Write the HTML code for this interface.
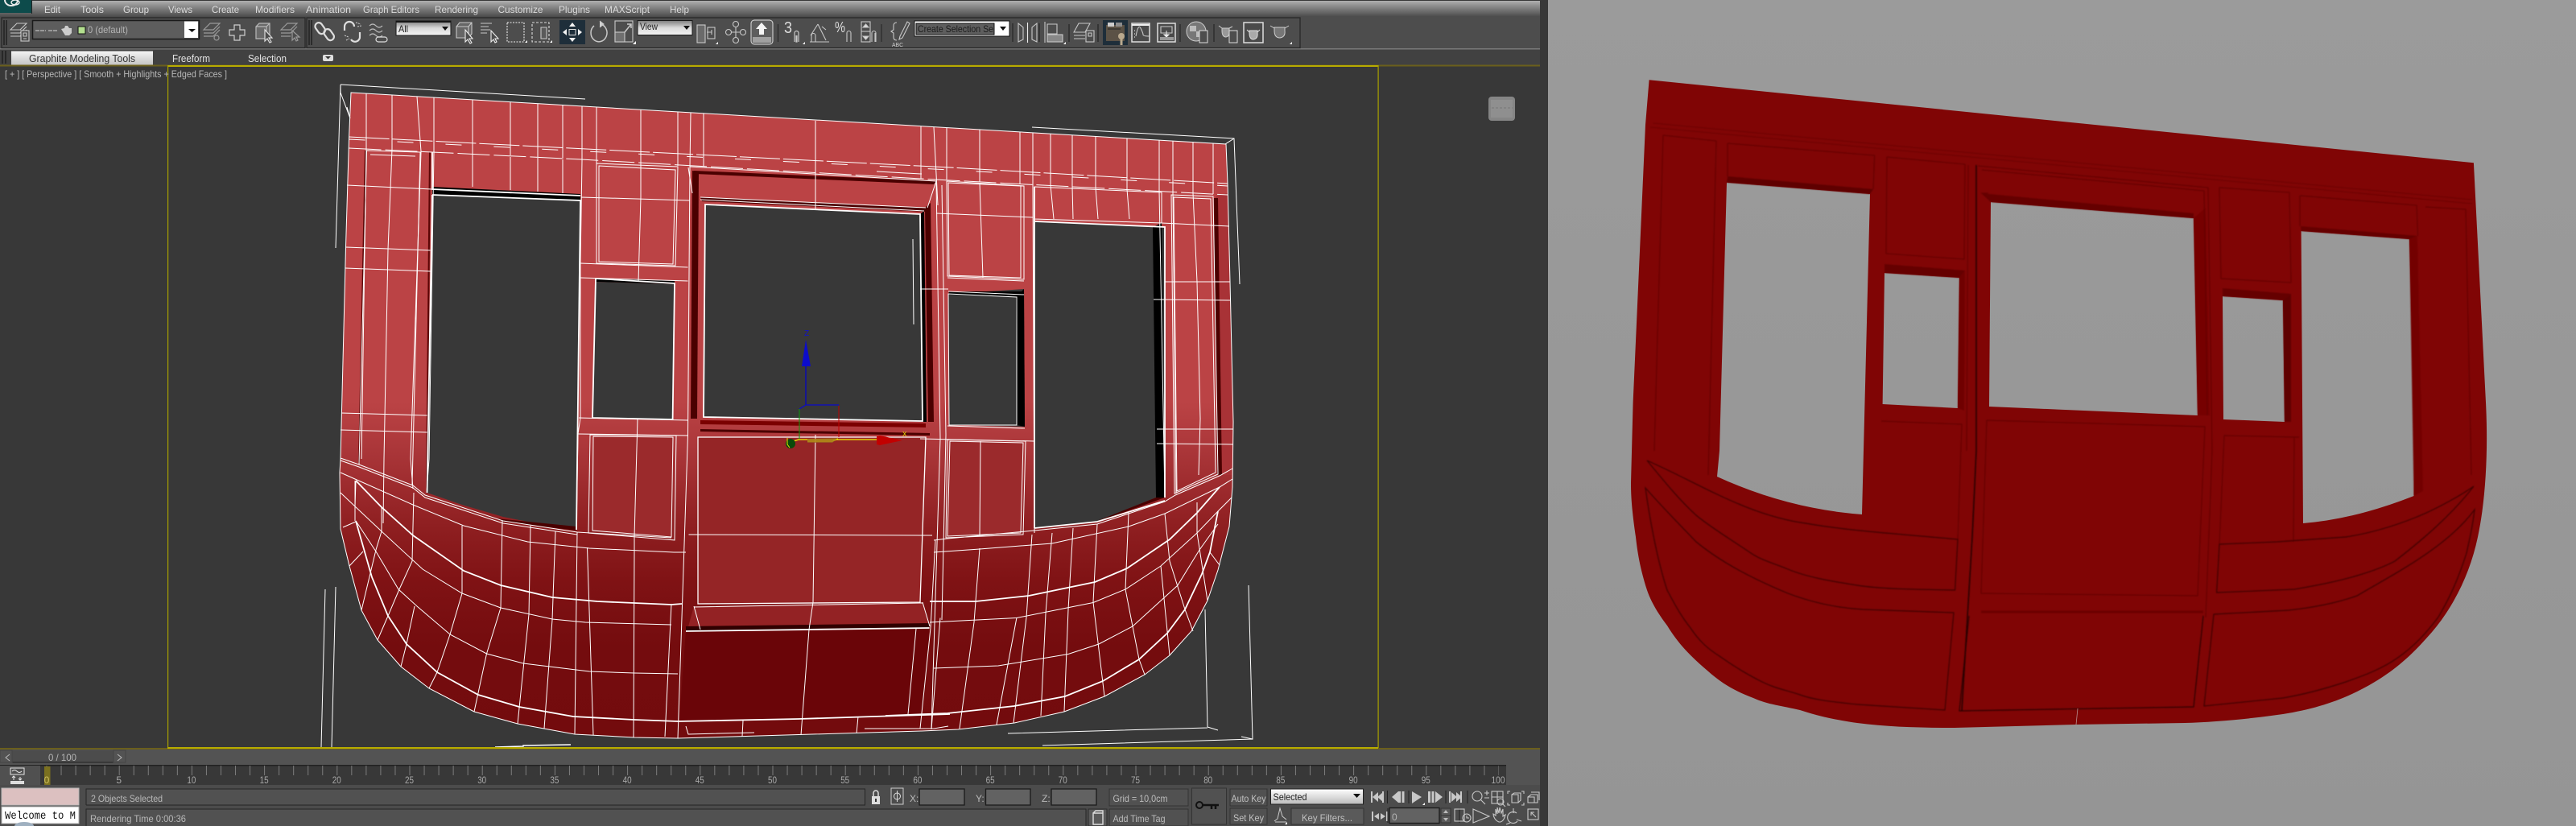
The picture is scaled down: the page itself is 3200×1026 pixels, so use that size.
<!DOCTYPE html>
<html><head><meta charset="utf-8"><title>3ds Max viewport and render</title>
<style>
html,body{margin:0;padding:0;width:3200px;height:1026px;overflow:hidden;background:#383838}
svg{display:block}
text{font-family:"Liberation Sans",sans-serif;font-size:12px}
.m{fill:#dcdcdc}.l{fill:#b8b8b8}.n{fill:#a9a9a9;font-size:12px;text-anchor:middle}
.w{fill:none;stroke:#fff;stroke-width:1}.b{fill:none;stroke:#fff;stroke-width:1.800}
.i{fill:none;stroke:#c8c8c8;stroke-width:1.100}
.p{fill:none;stroke:#650000;stroke-width:1.200}
.q{fill:none;stroke:#3c0000;stroke-width:1.200}
</style></head><body>
<svg width="3200" height="1026" viewBox="0 0 3200 1026" xmlns="http://www.w3.org/2000/svg">
<defs>
<linearGradient id="top" x1="0" y1="0" x2="0" y2="1"><stop offset="0" stop-color="#b0b0b0"/><stop offset=".35" stop-color="#8c8c8c"/><stop offset="1" stop-color="#505050"/></linearGradient>
<linearGradient id="tab" x1="0" y1="0" x2="0" y2="1"><stop offset="0" stop-color="#f4f4f4"/><stop offset="1" stop-color="#c4c4c4"/></linearGradient>
<linearGradient id="dd" x1="0" y1="0" x2="0" y2="1"><stop offset="0" stop-color="#7c7c7c"/><stop offset=".5" stop-color="#dadada"/><stop offset="1" stop-color="#f4f4f4"/></linearGradient>
<linearGradient id="sel" x1="0" y1="0" x2="0" y2="1"><stop offset="0" stop-color="#fff"/><stop offset="1" stop-color="#bbb"/></linearGradient>
<linearGradient id="mesh" gradientUnits="userSpaceOnUse" x1="0" y1="115" x2="0" y2="917">
<stop offset="0" stop-color="#bb4345"/><stop offset=".48" stop-color="#bb4345"/><stop offset=".56" stop-color="#a93538"/><stop offset=".67" stop-color="#8f1f21"/><stop offset=".76" stop-color="#7f1214"/><stop offset=".86" stop-color="#740c0e"/><stop offset="1" stop-color="#730b0d"/></linearGradient>
<linearGradient id="bg" x1="0" y1="0" x2="0" y2="1"><stop offset="0" stop-color="#9b9b9b"/><stop offset="1" stop-color="#959595"/></linearGradient>
<filter id="soft"><feGaussianBlur stdDeviation=".8"/></filter>
</defs>

<!-- base -->
<rect width="3200" height="1026" fill="#383838"/>
<rect x="1923" width="1277" height="1026" fill="url(#bg)"/>

<!-- top bar -->
<rect y="1" width="1913" height="19" fill="url(#top)"/>
<rect y="20" width="1913" height="41" fill="#4d4d4d"/>
<rect y="60" width="1913" height="1.500" fill="#7a7a7a"/>
<rect y="61.500" width="1913" height="19" fill="#414141"/>
<rect width="39" height="16" fill="#0d4b4b"/><rect x="39" width="1" height="17" fill="#222"/>
<path d="M6 0a8 7 0 0 0 16 0" fill="none" stroke="#e8e8e8" stroke-width="2"/><ellipse cx="19" cy="3" rx="5" ry="3" fill="none" stroke="#eee" stroke-width="1.400"/>
<text x="55" y="16" class="m" textLength="20" lengthAdjust="spacingAndGlyphs">Edit</text>
<text x="100" y="16" class="m" textLength="29" lengthAdjust="spacingAndGlyphs">Tools</text>
<text x="153" y="16" class="m" textLength="32" lengthAdjust="spacingAndGlyphs">Group</text>
<text x="209" y="16" class="m" textLength="30" lengthAdjust="spacingAndGlyphs">Views</text>
<text x="263" y="16" class="m" textLength="34" lengthAdjust="spacingAndGlyphs">Create</text>
<text x="317" y="16" class="m" textLength="49" lengthAdjust="spacingAndGlyphs">Modifiers</text>
<text x="380" y="16" class="m" textLength="56" lengthAdjust="spacingAndGlyphs">Animation</text>
<text x="451" y="16" class="m" textLength="70" lengthAdjust="spacingAndGlyphs">Graph Editors</text>
<text x="540" y="16" class="m" textLength="54" lengthAdjust="spacingAndGlyphs">Rendering</text>
<text x="618.500" y="16" class="m" textLength="56" lengthAdjust="spacingAndGlyphs">Customize</text>
<text x="694" y="16" class="m" textLength="39" lengthAdjust="spacingAndGlyphs">Plugins</text>
<text x="751" y="16" class="m" textLength="56" lengthAdjust="spacingAndGlyphs">MAXScript</text>
<text x="832" y="16" class="m" textLength="24" lengthAdjust="spacingAndGlyphs">Help</text>

<!-- toolbar frames -->
<path d="M2 22H379V59.500H2ZM381 22H1615V59.500H381Z" fill="none" stroke="#262626" stroke-width="1.200"/>
<path d="M5 25V56M8 25V56M384 25V56M387 25V56M3 63V79M7 63V79" stroke="#1d1d1d" stroke-width="1.400"/>

<!-- layer controls -->
<g class="i">
<path d="M13 37l8-8h12l-8 8zM13 41h12l8-8M13 45h12l8-8"/><rect x="26" y="38" width="10" height="13" fill="#4d4d4d"/><path d="M29 41h4v4h-4zM29 48h4"/>
</g>
<rect x="40.500" y="25.500" width="207" height="23" fill="#5d5d5d" stroke="#1a1a1a" stroke-width="1.500"/>
<rect x="229" y="26.500" width="17" height="20.500" fill="#fff"/><path d="M234 36h9l-4.500 4z" fill="#111"/>
<path d="M44 38h13M60 38h12" stroke="#999" stroke-width="2" stroke-dasharray="5 1"/>
<path d="M76 36l4-1 1-3h3l2 3 3 0 0 6-3 3h-5z" fill="#ccc"/>
<rect x="97" y="33" width="9" height="9" fill="#b3df8f" stroke="#111"/>
<text x="109" y="41" fill="#b4b4b4" textLength="50" lengthAdjust="spacingAndGlyphs">0 (default)</text>
<g fill="none" stroke="#9a9a9a" stroke-width="1.200">
<path d="M253 37l8-8h12l-8 8zM253 41h12l8-8M253 45h12l8-8"/><circle cx="269" cy="47" r="3"/>
<path d="M291 31h7v6h6v7h-6v6h-7v-6h-6v-7h6z" stroke="#cfcfcf"/>
<path d="M318 33l4-4h13v15l-4 4h-13zM318 33h13v15M331 33l4-4" stroke="#b9b9b9" fill="#6a6a6a"/><path d="M329 37v14l3-3 3 5 2-1-3-5h4z" fill="#4d4d4d" stroke="#ddd"/>
<path d="M349 37l8-8h12l-8 8zM349 41h12l8-8M349 45h12"/><path d="M363 38v12l3-3 2 4 2-1-2-4h4z" fill="#4d4d4d"/>
</g>

<!-- link icons -->
<g fill="none" stroke="#ddd" stroke-width="2.200">
<rect x="393" y="28" width="9" height="15" rx="4.500" transform="rotate(-35 397 35)"/><rect x="404" y="36" width="9" height="15" rx="4.500" transform="rotate(-35 408 43)"/>
<path d="M428 38v-5a6 6 0 0 1 12 0M447 40v5a6 6 0 0 1-11 4"/>
<path d="M459 32q4-4 8 0t8 0M459 38q4-4 8 0t8 0M459 44q4-4 8 0t8 0" stroke-width="1.200" stroke="#bbb"/><rect x="467" y="46" width="14" height="6" rx="3" stroke-width="1.200"/>
</g>
<path d="M442 28l6 2M444 33l5-1M428 44l5 2M430 50l4-2" stroke="#ccc" stroke-width="1" stroke-dasharray="2 1"/>

<!-- All dropdown -->
<rect x="492" y="26" width="68" height="18" fill="url(#dd)" stroke="#1a1a1a"/><rect x="492" y="26" width="68" height="2" fill="#151515"/>
<text x="495" y="40" fill="#222" textLength="12" lengthAdjust="spacingAndGlyphs">All</text><path d="M549 33h8l-4 5z" fill="#111"/>

<g class="i">
<path d="M567 33l4-5h15v14l-4 5h-15zM567 33h15v14M582 33l4-5" fill="#666"/><path d="M578 37v15l3-3 3 5 2-1-3-5h4z" fill="#4d4d4d" stroke="#eee"/>
<path d="M597 29h14M597 33h10M597 37h12M597 41h8"/><path d="M610 38v14l3-3 2 4 2-1-2-4h4z" fill="#4d4d4d" stroke="#eee"/>
<rect x="630" y="28" width="21" height="24" stroke-dasharray="2 1.500" stroke="#eee"/>
<rect x="661" y="28" width="21" height="24" stroke-dasharray="3 2" stroke="#ddd"/><path d="M672 34h7v14h-7z" fill="#5a5a5a"/>
</g>
<path d="M652 53l3-3v3zM683 53l3-3v3z" fill="#fff"/>
<!-- move rotate scale -->
<rect x="695" y="25" width="32" height="30" fill="#1e2e3a"/>
<path d="M711 28l-4 5h8zM711 52l-4-5h8zM699 40l5-4v8zM723 40l-5-4v8z" fill="#f2f2f2"/><rect x="707" y="36.500" width="8" height="7" fill="none" stroke="#ddd"/>
<g class="i">
<path d="M746 30a10 11 0 1 1-8 2" stroke-width="1.500"/><path d="M745 26l5 4-5 4" fill="#d0d0d0"/>
<rect x="764" y="26" width="22" height="26"/><rect x="764" y="40" width="12" height="12" fill="#6f6f6f"/><path d="M776 40l8-10m-5 0h5v5" stroke-width="1.500"/>
</g>
<path d="M786 55l4-4v4z" fill="#fff"/>
<!-- view dropdown -->
<rect x="792" y="25.500" width="68" height="18" fill="url(#dd)" stroke="#1a1a1a"/>
<text x="795" y="37" fill="#222" textLength="22" lengthAdjust="spacingAndGlyphs">View</text><path d="M849 32h8l-4 5z" fill="#111"/>
<g class="i">
<rect x="866" y="31" width="10" height="22" fill="#6a6a6a"/><rect x="879" y="34" width="9" height="14"/><path d="M878 40h6M884 37v6"/>
<circle cx="914" cy="30" r="3.500"/><circle cx="905" cy="40" r="3.500"/><circle cx="923" cy="40" r="3.500"/><circle cx="914" cy="50" r="3.500"/><path d="M914 33v14M908 40h12"/>
</g>
<path d="M889 55l3-3v3z" fill="#fff"/>
<rect x="933" y="25" width="27" height="30" rx="4" fill="#5e5e5e" stroke="#ddd"/>
<path d="M946 28l-7 8h4v7h6v-7h4z" fill="#f5f5f5"/><rect x="935" y="46" width="23" height="7" fill="#a0a0a0"/>
<path d="M966.500 30V52M1095 30V52" stroke="#222"/>
<g class="i">
<text x="974" y="41" fill="#ddd" stroke="none" style="font-size:20px" textLength="10" lengthAdjust="spacingAndGlyphs">3</text>
<path d="M987 52V41a2.500 2.500 0 0 1 5 0V52M989 44v8h1V44" stroke-width="1.200"/>
<path d="M1008 52V44a2.500 2.500 0 0 1 5 0V52M1006 52H1030M1016 30l-9 14M1016 30l10 20M1021 33l5 4"/>
<text x="1037" y="40" fill="#ddd" stroke="none" style="font-size:18px" textLength="13" lengthAdjust="spacingAndGlyphs">%</text>
<path d="M1052 52V41a2.500 2.500 0 0 1 5 0V52"/>
<rect x="1070" y="27" width="11" height="25"/><path d="M1072 34l3.500-4 3.500 4zM1072 45l3.500 4 3.500-4z" fill="#ddd"/><path d="M1070 39h11"/>
<path d="M1083 52V41a2.500 2.500 0 0 1 5 0V52M1087 52V41"/>
<path d="M1114 28q-4 0-4 4v5l-3 2 3 2v5q0 4 4 4M1118 45l9-18 3 2-9 18-4 2z"/>
</g>
<text x="1108" y="58" fill="#ccc" style="font-size:7px" textLength="14" lengthAdjust="spacingAndGlyphs">ABC</text>
<path d="M997 55l3-3v3z" fill="#fff"/>
<!-- create selection set -->
<rect x="1136" y="26" width="118" height="19" fill="#fff" stroke="#111"/>
<rect x="1138" y="29" width="97" height="14" fill="#5e5e5e" stroke="#111"/>
<text x="1140" y="40" fill="#1c1c1c" textLength="94" lengthAdjust="spacingAndGlyphs">Create Selection Se</text>
<path d="M1242 33h8l-4 5z" fill="#111"/>
<g class="i">
<path d="M1258 29V52M1291 29V52" stroke="#222"/>
<path d="M1265 29l6 5v15l-6 3zM1288 29l-6 5v15l6 3z"/><path d="M1276.500 28V53" stroke="#eee"/>
<path d="M1298 27V53M1301 30h12v12h-12z"/><rect x="1301" y="43" width="19" height="9" fill="#888"/>
<path d="M1328 30V52" stroke="#222"/>
<path d="M1334 40l6-11h14l-6 11zM1334 44h14M1334 48h14"/><rect x="1349" y="38" width="10" height="14" fill="#4d4d4d"/><path d="M1352 41h4v4h-4z"/>
<path d="M1364 30V52M1466 30V52M1508 30V52" stroke="#222"/>
</g>
<path d="M1321 55l3-3v3z" fill="#fff"/>
<rect x="1370" y="25" width="31" height="31" fill="#1e2e3a"/>
<path d="M1374 31h23v20h-23z" fill="#5b5246"/><path d="M1376 28h8v5h-8z" fill="#ccc"/><path d="M1386 28h8v5h-8z" fill="#8c8c8c"/><path d="M1376 36h16" stroke="#222"/>
<circle cx="1393" cy="45" r="4" fill="#b9a98e"/><path d="M1393 47v9" stroke="#b9a98e" stroke-width="3"/>
<rect x="1406" y="29" width="22" height="23" fill="#4a4a4a" stroke="#ddd" stroke-width="1.500"/><path d="M1406 31h22" stroke="#eee" stroke-width="2"/><path d="M1411 45q3-16 6-10t3 8 8 2" class="i"/><path d="M1409 38h1M1409 42h1M1409 46h1" stroke="#fff"/>
<rect x="1438" y="29" width="22" height="23" fill="#4a4a4a" stroke="#ddd" stroke-width="1.500"/><path d="M1442 33h14v8h-14z" class="i"/><path d="M1449 38v6M1446 43h6l-3 3z" fill="#eee" stroke="#eee"/><rect x="1441" y="46" width="17" height="4" fill="#999"/>
<circle cx="1486" cy="39" r="12" fill="#777" stroke="#ccc"/><path d="M1478 32h8v7h-8zM1486 39h8v7h-8z" fill="#bbb"/><rect x="1490" y="38" width="10" height="15" fill="#4d4d4d" stroke="#ddd"/>
<!-- teapots -->
<path d="M1514 32l4 3M1531 33l-4 2M1518 35h9v3q1 7-4 8-5 0-5-8z" fill="#999" stroke="#ccc"/><rect x="1527" y="38" width="10" height="15" fill="#4d4d4d" stroke="#ddd"/>
<rect x="1545" y="28" width="24" height="25" fill="#4a4a4a" stroke="#ddd" stroke-width="1.500"/><path d="M1549 37l3 3M1565 37l-3 3M1552 38h10v3q1 7-5 8-5 0-5-8z" fill="#aaa" stroke="#ddd"/>
<path d="M1578 32l5 3M1601 32l-5 3M1583 34h13v4q1 8-6 9-7 0-7-9z" fill="#777" stroke="#ccc"/><path d="M1602 55l3-3v3z" fill="#fff"/>

<!-- tabs -->
<rect x="14" y="63.500" width="176" height="17" fill="url(#tab)"/>
<text x="36" y="77" fill="#333" style="font-size:13px" textLength="132" lengthAdjust="spacingAndGlyphs">Graphite Modeling Tools</text>
<text x="214" y="77" fill="#e4e4e4" style="font-size:13px" textLength="47" lengthAdjust="spacingAndGlyphs">Freeform</text>
<text x="308" y="77" fill="#e4e4e4" style="font-size:13px" textLength="48" lengthAdjust="spacingAndGlyphs">Selection</text>
<rect x="401" y="68" width="13" height="8" rx="2" fill="#ddd"/><path d="M404 70h7l-3.500 3.500z" fill="#333"/>

<!-- viewport frames -->
<rect y="80.500" width="1913" height="2" fill="#6b5f1c"/>
<rect x="208" y="81" width="1504" height="2" fill="#b8ac00"/>
<rect x="208" y="81" width="1.200" height="849" fill="#a8a000"/>
<rect x="1711.500" y="81" width="1.200" height="849" fill="#a8a000"/>
<rect x="208" y="928" width="1504" height="2" fill="#b8ac00"/>
<text x="6" y="96" fill="#b8b8b8" textLength="276" lengthAdjust="spacingAndGlyphs">[ + ] [ Perspective ] [ Smooth + Highlights + Edged Faces ]</text>
<rect x="1849" y="120" width="33" height="30" rx="4" fill="#858585"/><path d="M1852 124h27v22h-27z" fill="#8f8f8f"/><path d="M1853 134h26" stroke="#777" stroke-dasharray="3 2"/>

<!-- MESH -->
<path fill-rule="evenodd" fill="url(#mesh)" d="M436 115L1523 179 1525 228 1528 350 1532 524 1531 605 1527 654 1513 708 1500 746 1480 784 1453 814 1422 838 1372 865 1322 884 1260 898 1190 906 1145 908 842 917 788 916 714 912 643 899 589 884 533 855 498 828 469 795 449 758 434 703 423 657 422 587 423 570 429.500 307 433.600 170Z
M537 242L721 249 716 658 666 650 625 642 574 627 530.500 612Z
M740 350L838 353 835.600 521 736 519Z
M876 254L1143 266 1148 524 874 518Z
M1178 365L1272 359 1273 530 1179 528Z
M1285 275L1447 282 1447 618 1436 618 1363 648 1285 656Z"/>
<path d="M1510 244L1525 240 1532 524 1531 590 1513 590Z" fill="#a83236"/>
<!-- door panels -->
<path d="M867 543L1150 543 1143 748 867 750Z" fill="#952526"/>
<path d="M737 542L836 543 834 667 736 659Z" fill="#9b2a2c"/>
<path d="M1180 548L1271 550 1268 662 1177 666Z" fill="#9b2a2c"/>
<path d="M862 753L1146 748 1155 778 854 782Z" fill="#932224"/>
<path d="M852 783L1154.500 780 1145 890 844 895Z" fill="#6a0508"/>
<!-- black returns -->
<g fill="#000">
<path d="M537 232L721 241 721 249 537 242Z"/>
<path d="M740 346L838 349 838 353 740 350Z"/>
<path d="M1262 369L1272 359 1273 530 1263 528Z"/>
<path d="M1432 282L1443 277 1447 618 1436 618Z"/>
<path d="M1143 266L1148 262 1151 524 1146 524Z"/>
<path d="M1179 362L1272 362 1263 369 1178 366Z"/>
</g>
<g fill="#4a0000">
<path d="M860 212L868 213 866 520 858 520Z"/>
<path d="M1149 258L1156 252 1160 524 1153 524Z"/>
<path d="M870 245L1150 258 1150 263 872 250Z"/>
<path d="M870 533L1155 538 1155 541 870 536Z"/>
<path d="M862 212L1163 225 1160 229 863 216Z"/>
<path d="M616 644L716 654 716 659 625 648Z"/>
<path d="M1363 647L1436 618 1447 618 1372 645Z"/>
<path d="M1508 246L1513 246 1518 590 1512 590Z"/>
</g>
<path d="M852 778L1154 774 1154.500 780 852 784Z" fill="#300000"/>
<path d="M870 522L1150 526 1150 531 870 527Z" fill="#7b0000"/>
<path d="M453 187L455 187 447 575 445 575ZM533 188L535 190 531 612 529 612Z" fill="#5a0505"/>

<!-- wireframe verticals top band -->
<path class="w" d="M455 116V185L449 570M487 118V185L482 310 477 570 476 650M518 120L523 188 518 337 510 570 513 607M539 121V189L533 570 530 612M587 124V190M634 127V193M668 129V195M699 130V197M723 132V200L721 327V519L718 539 716 658M741 133V204M796 136L796 245 793 350M792 520L788 667 788 683 787 916M842 139V206M858 140L857 207 854.500 540 849 707 842 917M874 141V207M1013 150L1013 260M1013 540L1010 748 1005 782 995 913M1144 157V222M1160 158L1165 255M1176 159V223M1217 161L1217 226M1217 227L1221 345M1218 548L1217 666M1267 164V229M1283 165V229L1285 662M1305 166V230L1309 272M1332 168V232L1333 272M1361 169V233L1364 272M1400 172V235L1403 272M1440 174V237L1447 618M1457 175V238L1461 613M1482 177V240L1487 350 1491 520 1489 590M1507 178V241"/>
<path class="w" d="M587 190V232M634 195V236M668 196V238M699 198V240M1163 225L1168 545 1157 906M1170 230L1175 540 1170 770"/>

<!-- ledges -->
<path class="w" d="M433.600 170L1180 208 1525 228" stroke-dasharray="50 4"/>
<path class="w" d="M433.600 173L1180 211 1525 231" stroke-dasharray="20 40"/>
<path class="w" d="M433.600 184L722 198 1180 224 1525 242" stroke-dasharray="40 5"/>
<path class="w" d="M436 115L1523 179 1525 228 1528 350 1532 524 1531 605 1527 654 1513 708 1500 746 1480 784 1453 814 1422 838 1372 865 1322 884 1260 898 1190 906 1145 908 842 917 788 916 714 912 643 899 589 884 533 855 498 828 469 795 449 758 434 703 423 657 422 587 423 570 429.500 307 433.600 170Z"/>

<!-- hole outlines -->
<path class="b" d="M537 242L721 249 716 658M530.500 612L537 242M537 189V235L721 243"/>
<path class="b" d="M740 346L838 352 835.600 521 736 519Z"/>
<path class="b" d="M876 254L1143 266 1146 523 874 518Z"/>
<path class="w" d="M1178 365L1263 369 1263 528 1179 528Z"/>
<path class="b" d="M1285 232V656M1285 275L1447 282 1447 618"/>
<path class="b" d="M1285 656L1363 648 1447 622"/>

<!-- panels -->
<path class="w" d="M455.500 187L522 189 512 603M446 577L455.500 187M460 192L516 194M741 203L842 207 839 330 741 327ZM744 206L839 211 836 328 744 325Z"/>
<path class="w" d="M737 542L836 543 834 667 736 659ZM733 540L840 541 838 671 731 662Z"/>
<path class="w" d="M857 207L1163 225M870 245L1150 258M870 248L1148 262"/>
<path class="w" d="M1178 227L1268 231 1268 345 1179 342ZM1176 225L1272 231 1272 347 1177 343Z"/>
<path class="w" d="M1180 548L1271 550 1268 662 1177 666ZM1177 546L1274 548 1271 664 1175 668Z"/>
<path class="w" d="M1285 232L1443 239 1443 277 1285 272ZM1455 242L1507 244 1513 589 1459 613ZM1458 245L1504 247 1510 587 1462 610Z"/>
<path class="w" style="stroke-width:1.300" d="M867 543L1150 543 1143 748 867 750Z"/>
<path class="w" d="M862 754L1146 749M855.500 664L1158 665M862 753L870 782M1146 748L1155 778"/>
<path class="b" d="M852 784L1154.500 780"/>
<path class="w" d="M1268 231H1272M923 895L922 915M1066 890L1064 911M852 902L855 912 937 910M1074 905H1160L1178 902"/>

<!-- rows -->
<path class="w" d="M431 230L536 235M429.500 307L534.600 311M428.500 333L534.600 337M424 513L530.500 516M423 534L530.500 537M722 245L857 249M721 327L854.500 332M721 345L854.500 349M719 519L854.500 522M718 539L854.500 541M1163 265L1283 270M1443 277L1527 281M1447 350L1528 350M1433 372L1528 373M1437 533L1532 533M1437 551L1532 552M1177 529L1273 532M1143 545L1285 548M1177 345L1272 349M1143 359L1178 359M1178 362L1272 366M855 208L860 240M1163 225L1152 258"/>

<!-- curves left -->
<path class="w" d="M423 569L446 577 513 603 528 615 625 647 717 661 834 668M423 572L446 580 513 606 528 618 625 650 717 664"/>
<path class="w" d="M423 587L441 595 513 627 576 653 655.500 673 732 681 837 686 852 686"/>
<path class="b" d="M442 597L474 630 513 665 576 709 622 727 686 742 742 747 834 751 847 750"/>
<path class="w" d="M423 612L441 629 474 660 525 707 574 737 622 755 686 769 727 773 834 776"/>
<path class="b" d="M442 647L462 717 482 765 505 800 543 835 594 863 645 878 712 890 788 894 842 896 992 893 1180 887"/>
<path class="w" d="M442 647L467 685 495 732 518 753 559 788 604.500 812 650 824 732 834 788 836 842 837"/>
<path class="w" d="M574 653L574 737 559 788 543 835 533 855M624 647L622 755 604.500 812 589 884M659 653L657 763 643 899M690 660L686 770 676 905M717 661L714 912M729.500 680L737 913M826 915L834 750M514 612L512 697 496 732 482 765 469 795M474 630L474 660 467 683 449 758M451 685L434 703M442 648L426 655M441 597V647M515 753L505 800 498 828M442 597L441 629"/>

<!-- curves right -->
<path class="w" d="M1531 582L1515 591 1460 615 1447 623 1363 651 1285 659 1177 669 1160 671"/>
<path class="w" d="M1531 595L1515 605 1447 638 1402 654 1307 675 1217 682 1160 686"/>
<path class="b" d="M1515 605L1487 637 1453 670 1400 706 1360 723 1278 740 1212 747 1155 747"/>
<path class="w" d="M1530 618L1513 635 1487 662 1442 703 1398 732 1358 748.500 1263 767.500 1155 773"/>
<path class="b" d="M1513 635L1503 686 1493 713 1472 757 1450 786.500 1415 819 1370 846 1323 865 1260 877 1177 886 1100 889"/>
<path class="w" d="M1513 651L1490 683 1463 727 1407 778 1365 800 1327 812.500 1240 827 1160 830"/>
<path class="w" d="M1447 638L1453 697 1472 757 1482 784M1402 637L1398 732 1415 819 1422 838M1363 651L1358 748 1372 865M1333 656L1327 757 1322 884M1307 662L1299 762 1293 889M1282 664L1275 767 1259 898M1263 767L1238 900M1217 681L1210 773 1192 905M1168 767.500L1157 906M1138 781L1128 887M1487 624L1487 662 1500 746M1503 686L1515 702M1442 703L1453 814M1162 671L1156 780 1143 905"/>

<!-- offset wire object -->
<path class="w" d="M423 105L727 123M423 105L417 308M423 105V115L435 147M431 133L435 147M1282 158L1533 172 1540 353M1522 179L1533 172M1551 727L1556 918 1542 915M1556 918L1295 926M1497 757L1500 903 1513 907M1500 904L1252 911M404 732L399 928M417 729L412 928M1134 297L1135 403M1089 213L1145 216"/>
<path class="w" style="stroke-width:1.500" d="M615 928L650 927 650 926 709 925"/>

<!-- gizmo -->
<path d="M1001 503V455" stroke="#0000cc" stroke-width="1.200"/><path d="M1001 422L996 455H1007Z" fill="#0c0ccc"/>
<text x="999" y="417" fill="#0f0fd0" style="font-size:10px">Z</text>
<path d="M993 508L1001 503H1042" stroke="#0a0acc" fill="none" stroke-width="1.200"/>
<path d="M1042 504V543" stroke="#c00000" stroke-width="1"/>
<path d="M993 508V547" stroke="#0a9a0a" stroke-width="1"/>
<path d="M1003 548H1034L1041 545" stroke="#f4f000" fill="none" stroke-width="1.400"/>
<path d="M986 548L992 546 1089 546" stroke="#f4f000" fill="none" stroke-width="1.200"/>
<path d="M1003 545L1041 544 1034 550 1003 550Z" fill="#9a6a20" opacity=".7"/>
<path d="M1089 542L1093 541 1121 547 1093 553 1089 552Z" fill="#c20000"/>
<circle cx="982" cy="551" r="6" fill="#0a4a0a"/><path d="M978 544V552L981 556" stroke="#e8e400" fill="none"/>
<text x="1121" y="542" fill="#e8e400" style="font-size:8px">X</text>

<!-- BOTTOM UI -->
<rect y="930" width="1913" height="96" fill="#535353"/>
<rect y="929" width="1913" height="2" fill="#6b5f1c"/>
<rect x="208" y="928" width="1504" height="2" fill="#b8ac00"/>
<rect x="15" y="932" width="126" height="15" fill="#4c4c4c"/><path d="M15 947H141V932" fill="none" stroke="#222"/>
<text x="60" y="945" fill="#b4b4b4" textLength="35" lengthAdjust="spacingAndGlyphs">0 / 100</text>
<path d="M12 937l-5 4 5 4M146 937l5 4-5 4" fill="none" stroke="#bbb"/>
<rect y="932" width="15" height="15" fill="none" stroke="#444"/><rect x="141" y="932" width="15" height="15" fill="none" stroke="#444"/>

<!-- trackbar -->
<rect y="950" width="1871" height="25" fill="#383838"/>
<rect y="950" width="1871" height="1.500" fill="#222"/>
<rect y="951" width="50" height="24" fill="#505050"/>
<rect x="13" y="954" width="17" height="8" fill="none" stroke="#e8e8e8"/><path d="M15 958q3-3 6 0t6 0" stroke="#e8e8e8" fill="none"/>
<path d="M17 965v4M15 966l2-2 2 2M25 965v4M23 967l2 2 2-2" stroke="#e8e8e8" fill="none"/><rect x="13" y="970" width="17" height="4" fill="#ddd"/>
<path d="M57.500 957H1862" stroke="#7c7c7c" stroke-width="12" stroke-dasharray="1 17.040"/>
<rect x="55" y="952" width="7.500" height="23" fill="#7b7120"/>
<text x="58" y="973" class="n" style="fill:#d0c060">0</text>
<text x="147.700" y="973" class="n">5</text><text x="237.900" y="973" class="n" textLength="11" lengthAdjust="spacingAndGlyphs">10</text><text x="328.100" y="973" class="n" textLength="11" lengthAdjust="spacingAndGlyphs">15</text><text x="418.300" y="973" class="n" textLength="11" lengthAdjust="spacingAndGlyphs">20</text><text x="508.500" y="973" class="n" textLength="11" lengthAdjust="spacingAndGlyphs">25</text><text x="598.700" y="973" class="n" textLength="11" lengthAdjust="spacingAndGlyphs">30</text><text x="688.900" y="973" class="n" textLength="11" lengthAdjust="spacingAndGlyphs">35</text><text x="779.100" y="973" class="n" textLength="11" lengthAdjust="spacingAndGlyphs">40</text><text x="869.300" y="973" class="n" textLength="11" lengthAdjust="spacingAndGlyphs">45</text><text x="959.500" y="973" class="n" textLength="11" lengthAdjust="spacingAndGlyphs">50</text><text x="1049.700" y="973" class="n" textLength="11" lengthAdjust="spacingAndGlyphs">55</text><text x="1139.900" y="973" class="n" textLength="11" lengthAdjust="spacingAndGlyphs">60</text><text x="1230.100" y="973" class="n" textLength="11" lengthAdjust="spacingAndGlyphs">65</text><text x="1320.300" y="973" class="n" textLength="11" lengthAdjust="spacingAndGlyphs">70</text><text x="1410.500" y="973" class="n" textLength="11" lengthAdjust="spacingAndGlyphs">75</text><text x="1500.700" y="973" class="n" textLength="11" lengthAdjust="spacingAndGlyphs">80</text><text x="1590.900" y="973" class="n" textLength="11" lengthAdjust="spacingAndGlyphs">85</text><text x="1681.100" y="973" class="n" textLength="11" lengthAdjust="spacingAndGlyphs">90</text><text x="1771.300" y="973" class="n" textLength="11" lengthAdjust="spacingAndGlyphs">95</text><text x="1861" y="973" class="n" textLength="17" lengthAdjust="spacingAndGlyphs">100</text>

<!-- status left -->
<rect x="0" y="975" width="1913" height="51" fill="#4c4c4c"/>
<rect x="2" y="979" width="96" height="21" fill="#dcc0c0" stroke="#b8b8b8"/>
<rect x="2" y="1002" width="96" height="21" fill="#fff" stroke="#aaa"/>
<text x="6" y="1017" fill="#111" style="font-family:'Liberation Mono',monospace;font-size:14px" textLength="88" lengthAdjust="spacingAndGlyphs">Welcome to M</text>
<path d="M18 1026a12 5 0 0 1 24 0" fill="#9fb0c0"/>
<path d="M107 1000V980H1074.500V1000H107M107 1026V1005H1349V1026" fill="#515151" stroke="#252525"/>
<text x="113" y="996" fill="#b8b8b8" textLength="89" lengthAdjust="spacingAndGlyphs">2 Objects Selected</text>
<text x="112" y="1021" fill="#b8b8b8" textLength="119" lengthAdjust="spacingAndGlyphs">Rendering Time  0:00:36</text>

<!-- lock + coords -->
<rect x="1083" y="989" width="10" height="10" fill="#ddd"/><path d="M1085 989v-4a3 3 0 0 1 6 0v4" fill="none" stroke="#ddd" stroke-width="1.500"/><rect x="1087" y="992" width="2" height="4" fill="#333"/>
<rect x="1107" y="979" width="15" height="20" fill="none" stroke="#ccc"/><circle cx="1114.500" cy="989" r="4" fill="none" stroke="#ddd"/><path d="M1114.500 982v14" stroke="#ddd"/>
<text x="1130" y="996" class="l">X:</text><text x="1212" y="996" class="l">Y:</text><text x="1294" y="996" class="l">Z:</text>
<path d="M1142 1000V980H1198V1000ZM1224.500 1000V980H1280V1000ZM1306 1000V980H1362V1000Z" fill="#626262" stroke="#1a1a1a" stroke-width="1.300"/>
<rect x="1378" y="980" width="98" height="21" fill="#515151" stroke="#333"/>
<text x="1382.500" y="996" fill="#bcbcbc" textLength="68" lengthAdjust="spacingAndGlyphs">Grid = 10,0cm</text>
<rect x="1352" y="1005" width="23" height="21" fill="#5a5a5a" stroke="#2a2a2a"/><path d="M1358 1010h12v14h-12zM1358 1010l3-3h9v14" fill="none" stroke="#ddd" stroke-width="1.400"/>
<rect x="1378" y="1005" width="98" height="21" fill="#515151" stroke="#333"/>
<text x="1382.500" y="1021" fill="#bcbcbc" textLength="65" lengthAdjust="spacingAndGlyphs">Add Time Tag</text>

<!-- keys -->
<rect x="1480.500" y="979" width="43" height="45" fill="#515151" stroke="#333"/>
<circle cx="1490" cy="1000" r="4" fill="none" stroke="#111" stroke-width="2"/><path d="M1494 1000H1514M1505 1000v5M1510 1000v5" stroke="#111" stroke-width="2.500"/>
<rect x="1528" y="980" width="46" height="21" fill="#515151" stroke="#333"/>
<text x="1529.500" y="996" fill="#c0c0c0" textLength="43" lengthAdjust="spacingAndGlyphs">Auto Key</text>
<rect x="1578.500" y="980" width="115" height="19" fill="url(#sel)" stroke="#222"/>
<text x="1581.500" y="994" fill="#222" textLength="42" lengthAdjust="spacingAndGlyphs">Selected</text><path d="M1681 986h9l-4.500 5z" fill="#111"/>
<rect x="1528" y="1004" width="46" height="20" fill="#515151" stroke="#333"/>
<text x="1532" y="1020" fill="#c0c0c0" textLength="38" lengthAdjust="spacingAndGlyphs">Set Key</text>
<path d="M1583 1020l4-3 3-13 3 10 5 4M1584 1021h14" fill="none" stroke="#ccc"/><path d="M1596 1024l3-3v3z" fill="#fff"/>
<rect x="1604" y="1004" width="90" height="20" fill="#5a5a5a" stroke="#333"/>
<text x="1617" y="1020" fill="#c0c0c0" textLength="63" lengthAdjust="spacingAndGlyphs">Key Filters...</text>

<!-- playback -->
<g fill="#c8c8c8">
<path d="M1703 983h2v14h-2zM1705 990l7-6v12zM1711 990l7-6v12zM1717 983h2v14h-2z"/>
<path d="M1729 990l8-7v14zM1737 983h3v14h-3zM1741.500 983h3v14h-3z"/>
<path d="M1754 983l12 7-12 8z"/><path d="M1767 1000l3-3v3z" fill="#fff"/>
<path d="M1774 983h3v14h-3zM1778.500 983h3v14h-3zM1783 983l9 7-9 7z"/>
<path d="M1800 983h2v14h-2zM1803 984l7 6-7 6zM1809 984l7 6-7 6zM1814 983h2v14h-2z"/>
<path d="M1704 1008h2v12h-2zM1707 1014l6-4v8zM1721 1014l-6-4v8zM1722 1008h2v12h-2z"/>
</g>
<path d="M1723.500 982v16M1750 982v16M1796 982v16M1823 982v16M1724 1004v18M1813 1004v18" stroke="#222"/>
<rect x="1726" y="1003.500" width="62" height="19" fill="#626262" stroke="#1a1a1a" stroke-width="1.300"/>
<text x="1729" y="1019" fill="#b4b4b4">0</text>
<rect x="1790" y="1004" width="12" height="9" fill="#5a5a5a" stroke="#333"/><rect x="1790" y="1013" width="12" height="9" fill="#5a5a5a" stroke="#333"/><path d="M1793 1010l3-4 3 4zM1793 1016l3 4 3-4z" fill="#bbb"/>
<g class="i">
<circle cx="1835" cy="989" r="6"/><path d="M1839 993l6 6M1844 985h6M1847 982v6M1844 991h6"/>
<rect x="1853" y="983" width="14" height="15"/><path d="M1853 990h14M1860 983v15"/><circle cx="1864" cy="996" r="4"/><path d="M1867 999l3 3"/>
<path d="M1876 983h-3v3M1890 983h3v3M1876 1000h-3v-3M1890 1000h3v-3M1878 987l3-2h8v9l-3 3h-8zM1878 987h8v10"/>
<path d="M1898 990l4-3h8v10h-12zM1898 990h8v7M1902 984h10v10"/>
<rect x="1807" y="1005" width="12" height="15"/><circle cx="1822" cy="1016" r="5"/><path d="M1822 1013v3h3"/>
<path d="M1830 1005l20 9-20 8z"/>
<path d="M1862 1021c-5-2-7-7-7-10l3 2v-8l2 6v-8l2 7 1-7 2 7 2-5 0 9 3-2c-1 5-3 8-6 9z"/>
<path d="M1880 1004v6M1884 1010a7 7 0 1 0 1 10M1876 1022l-5 2M1884 1018l6 2"/>
<rect x="1898" y="1005" width="13" height="13"/><path d="M1902 1009l6 6M1902 1013v-4h4"/>
</g>

<!-- RENDER DOOR -->
<path fill-rule="evenodd" fill="#800505" d="M2048.600 99.300L3072.900 202.300 3088 500C3091 560 3088 620 3078 667C3068 715 3045 760 3014 793C2990 820 2970 835 2950 847C2915 868 2880 880 2836 887C2795 893 2750 897 2714 898L2578 900 2428 904C2385 904 2345 903 2307 898C2280 894 2260 890 2236 882C2215 877 2195 875 2178 867C2155 858 2140 850 2121 833C2100 815 2085 800 2071 777C2058 760 2050 745 2046 733C2037 705 2034 685 2032 667C2028 640 2026 620 2026 600L2028.600 500 2044 155Z
M2145 226.700L2323 241 2313 639Q2220 632 2133 592L2136 560Z
M2341 339L2434 345 2432 507 2338.600 502Z
M2473 251L2725 271 2730 516 2471 505Z
M2761 368L2836 373 2838 524 2762 521Z
M2858.600 287L2993 297 3000 560 2998.600 616Q2925 645 2861 650Z"/>
<g filter="url(#soft)">
<path d="M2053.600 153L3071 248M2050 158L3071 253" stroke="#6c0000" fill="none" stroke-width="1"/>
<!-- lintel shades -->
<path d="M2146 219L2327 235 2323 241 2145 226.700Z" fill="#5f0000"/>
<path d="M2341 328L2441 336 2434 345 2341 339Z" fill="#650000"/>
<path d="M2461 240L2725 265 2725 271 2473 251Z" fill="#650000"/>
<path d="M2761 358L2846 365 2836 373 2761 368Z" fill="#650000"/>
<path d="M2858 281L3003.600 293 2993 297 2858.600 287Z" fill="#650000"/>
<path d="M2434 345L2441 336 2440 510 2432 507Z" fill="#700000"/>
<path d="M2836 373L2846 365 2846 524 2838 524Z" fill="#5f0000"/>
<path d="M2993 297L3003 293 3010 610 2998.600 616Z" fill="#730000"/>
<path d="M2725 271L2740 258 2745 516 2730 516Z" fill="#760000"/>
<!-- panels -->
<path class="p" d="M2146 178L2328.600 193 2327 235M2146 178V219"/>
<path class="p" d="M2066 168L2132 175 2122 590M2055 560L2066 168"/>
<path class="p" d="M2344 195L2441 204 2440 322 2343 315Z"/>
<path class="p" d="M2757 233L2844 239 2846 351 2759 346Z"/>
<path class="p" d="M2857 243L3002 255 3003.600 293M2857 243V281"/>
<path class="p" d="M3013 257L3063 260 3070 590"/>
<path class="p" d="M2457 206L2743 233 2748 560 2740 767M2461 240L2470 240"/>
<path class="p" d="M2462 211L2738 237 2742 516"/>
<path class="p" d="M2468 522L2739 530 2730 740 2461 737Z"/>
<path class="p" d="M2337 523L2437 527 2432 670M2856 543L2763 541 2757 676M2763 541L2850 543 2849 673"/>
<path d="M2461 760H2737" stroke="#6a0000" stroke-width="3" fill="none"/>
<path class="q" d="M2046 572C2110 600 2170 640 2243 650C2300 660 2370 664 2432 670L2428.600 733C2380 732 2340 732 2307 727C2275 722 2245 717 2221 707C2205 700 2190 697 2175 687C2150 670 2125 655 2107 640C2085 620 2065 595 2046 572Z"/>
<path class="q" d="M2044 606C2065 630 2085 650 2107 673C2140 700 2180 720 2221 737C2250 748 2280 755 2314 757L2427 761 2416 882 2307 875C2280 872 2255 870 2236 863C2218 857 2205 855 2189 847C2165 835 2150 825 2136 815C2120 805 2110 795 2100 780C2088 765 2080 750 2071 733C2060 700 2050 650 2044 606Z"/>
<path class="q" d="M3073 604C3050 620 3020 635 3000 643C2970 655 2940 663 2914 667L2828.600 673 2757 676 2753.600 736 2850 732C2880 727 2905 722 2928 715C2945 710 2960 705 2975 697C3010 670 3045 640 3073 604Z"/>
<path class="q" d="M3074 633C3040 680 2970 715 2928 740C2900 750 2870 755 2843 758L2750 763 2738 877 2836 867C2865 862 2890 855 2914 847C2940 838 2960 830 2978.600 817C3000 802 3015 785 3028.600 767C3045 740 3055 715 3064 687C3070 660 3072 650 3074 633Z"/>
<path d="M2446 765L2434 883 2725 878 2737 765" fill="none" stroke="#2a0000" stroke-width="1.200"/>
<path d="M2455 205L2455 560 2450 667 2437 883" fill="none" stroke="#200000" stroke-width="1.500"/>
<path d="M2445 205L2443 560" fill="none" stroke="#650000" stroke-width="1.200"/>
</g>
<path d="M2581 880L2579 900" stroke="#b89090" stroke-width=".8"/>
</svg>
</body></html>
